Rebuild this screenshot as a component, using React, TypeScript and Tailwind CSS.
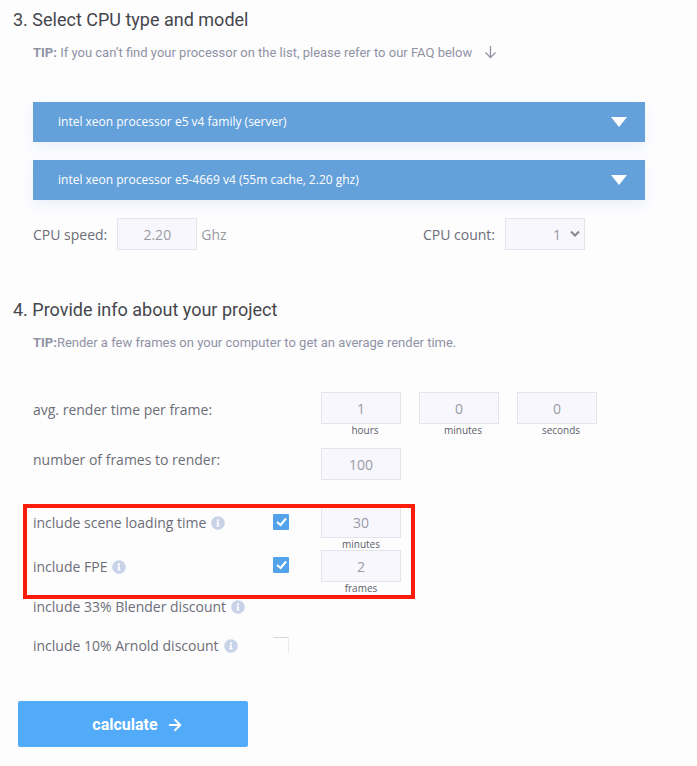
import React, { useState } from "react";
import { ArrowRight } from "lucide-react";
import { FaInfoCircle } from "react-icons/fa";

const boxStyle =
  "block w-20 h-8 border border-[#e4e4ec] bg-[#f7f7fd] text-[14px] text-[#9a9ba3] text-center outline-none focus:border-[#52a9f8]";

interface CpuSelectProps {
  label: string;
  options: string[];
}

function CpuSelect({ label, options }: CpuSelectProps) {
  return (
    <div className="relative shadow-[0_5px_12px_rgba(90,130,230,0.10)]">
      <select
        aria-label={label}
        className="block w-full h-10 pl-[25px] pr-12 appearance-none bg-[#64a1da] text-white text-[12px] outline-none"
      >
        {options.map((o) => (
          <option key={o}>{o}</option>
        ))}
      </select>
      <svg
        className="absolute right-[18px] top-[15px] pointer-events-none"
        width="16"
        height="10"
        viewBox="0 0 16 10"
        fill="white"
      >
        <path d="M0 0h16L8 10z" />
      </svg>
    </div>
  );
}

interface NumberBoxProps {
  id: string;
  initial: string;
  caption?: string;
  captionClass?: string;
}

function NumberBox({ id, initial, caption, captionClass = "" }: NumberBoxProps) {
  const [value, setValue] = useState(initial);

  return (
    <div className="w-20">
      <input
        id={id}
        type="text"
        inputMode="decimal"
        aria-label={caption}
        value={value}
        onChange={(e) => setValue(e.target.value)}
        className={boxStyle}
      />
      {caption && (
        <div className={`text-[10px] leading-[12px] text-center text-[#5c5d66] ${captionClass}`}>
          {caption}
        </div>
      )}
    </div>
  );
}

function CheckBox({ id, defaultChecked }: { id: string; defaultChecked?: boolean }) {
  return (
    <div className="relative w-4 h-4">
      <input
        id={id}
        type="checkbox"
        defaultChecked={defaultChecked}
        className="peer block w-4 h-4 appearance-none rounded-[1px] border-t border-r border-t-[#d6d6da] border-r-[#ececf0] checked:border-0 checked:bg-[#52a3ec]"
      />
      <svg
        className="absolute inset-0 pointer-events-none opacity-0 peer-checked:opacity-100"
        width="16"
        height="16"
        viewBox="0 0 16 16"
        fill="none"
        stroke="white"
        strokeWidth="2"
      >
        <path d="M4 8 7.6 11 13 4.5" />
      </svg>
    </div>
  );
}

function InfoLabel({ htmlFor, children, className = "" }: { htmlFor?: string; children: React.ReactNode; className?: string }) {
  return (
    <label htmlFor={htmlFor} className={`flex items-center gap-[5px] ${className}`}>
      {children}
      <FaInfoCircle size={14} className="text-[#c9d3e8]" />
    </label>
  );
}

const rowStyle = "grid grid-cols-[240px_48px_1fr] items-start";

export default function App() {
  return (
    <main className="min-h-screen bg-[#fdfdfe] pt-2 pb-5 pl-[33px] pr-[52px] font-['Open_Sans',sans-serif] text-[14px] text-[#6c6d77]">
      {/* CPU */}
      <section>
        <h2 className="-ml-5 font-[Roboto,sans-serif] text-[18px] leading-6 text-[#45464c]">
          3. Select CPU type and model
        </h2>
        <p className="mt-[11px] flex items-center font-[Roboto,sans-serif] text-[13px] leading-5 text-[#9092a5]">
          <span className="whitespace-pre">
            <b className="font-bold">TIP:</b> If you can’t find your processor on the list, please refer to our FAQ below
          </span>
          <svg
            className="ml-3 mb-[3px]"
            width="13"
            height="14"
            viewBox="0 0 13 14"
            fill="none"
            stroke="currentColor"
            strokeWidth="1.3"
          >
            <path d="M6.5 1v11.5M1.5 7.5l5 5 5-5" />
          </svg>
        </p>

        <div className="mt-[39px] space-y-[18px]">
          <CpuSelect label="CPU family" options={["intel xeon processor e5 v4 family (server)"]} />
          <CpuSelect label="CPU model" options={["intel xeon processor e5-4669 v4 (55m cache, 2.20 ghz)"]} />
        </div>

        <div className="mt-[18px] pr-[60px] flex justify-between">
          <div className="flex items-center">
            <label htmlFor="speed" className="mr-[10px]">CPU speed:</label>
            <NumberBox id="speed" initial="2.20" />
            <span className="ml-1 text-[#999aa2]">Ghz</span>
          </div>
          <div className="flex items-center">
            <label htmlFor="count" className="mr-[10px]">CPU count:</label>
            <div className="relative">
              <select
                id="count"
                defaultValue="1"
                className="block w-20 h-8 pr-[23px] appearance-none border border-[#e4e4ec] bg-[#f7f7fd] text-[14px] text-[#9a9ba3] text-right [text-align-last:right] outline-none"
              >
                <option>1</option>
                <option>2</option>
                <option>4</option>
              </select>
              <svg
                className="absolute right-[5px] top-3 pointer-events-none"
                width="10"
                height="8"
                viewBox="0 0 10 8"
                fill="none"
                stroke="#85868f"
                strokeWidth="2"
              >
                <path d="M1 1.5 5 5.5 9 1.5" />
              </svg>
            </div>
          </div>
        </div>
      </section>

      {/* Project */}
      <section className="mt-12">
        <h2 className="-ml-5 font-[Roboto,sans-serif] text-[18px] leading-6 text-[#45464c]">
          4. Provide info about your project
        </h2>
        <p className="mt-[11px] font-[Roboto,sans-serif] text-[13px] leading-5 text-[#9092a5]">
          <b className="font-bold">TIP:</b>Render a few frames on your computer to get an average render time.
        </p>

        <form onSubmit={(e) => e.preventDefault()} className="mt-[39px]">
          <div className="grid grid-cols-[288px_1fr]">
            <label htmlFor="hours" className="leading-9">avg. render time per frame:</label>
            <div className="flex gap-[18px]">
              <NumberBox id="hours" initial="1" caption="hours" captionClass="pl-2" />
              <NumberBox id="minutes" initial="0" caption="minutes" captionClass="pl-2" />
              <NumberBox id="seconds" initial="0" caption="seconds" captionClass="pl-2" />
            </div>
          </div>

          <div className="mt-3 grid grid-cols-[288px_1fr]">
            <label htmlFor="frames" className="leading-6">number of frames to render:</label>
            <NumberBox id="frames" initial="100" />
          </div>

          <div className="relative mt-[26px]">
            <div className={rowStyle}>
              <InfoLabel htmlFor="loading" className="leading-[34px]">include scene loading time</InfoLabel>
              <div className="pt-2">
                <CheckBox id="loading" defaultChecked />
              </div>
              <NumberBox id="loading-time" initial="30" caption="minutes" />
            </div>
            <div className={rowStyle}>
              <InfoLabel htmlFor="fpe" className="leading-[34px]">include FPE</InfoLabel>
              <div className="pt-[7px]">
                <CheckBox id="fpe" defaultChecked />
              </div>
              <NumberBox id="fpe-frames" initial="2" caption="frames" />
            </div>
            {/* Highlight frame */}
            <div className="absolute -left-[10px] -top-[2px] w-[392px] h-[95px] border-4 border-[#fc1c0a] pointer-events-none" />
          </div>

          <InfoLabel className="mt-px leading-6">include 33% Blender discount</InfoLabel>
          <div className={`mt-[15px] ${rowStyle}`}>
            <InfoLabel htmlFor="arnold" className="leading-6">include 10% Arnold discount</InfoLabel>
            <div className="pt-[3px]">
              <CheckBox id="arnold" />
            </div>
          </div>

          <button
            type="submit"
            className="mt-[43px] -ml-[15px] w-[230px] h-[46px] pl-[10px] pt-px flex items-center justify-center gap-2 rounded-[2px] bg-[#52abf8] font-[Roboto,sans-serif] font-bold text-[16px] text-white hover:bg-[#3f9df0]"
          >
            calculate
            <ArrowRight size={18} strokeWidth={2.5} />
          </button>
        </form>
      </section>
    </main>
  );
}
